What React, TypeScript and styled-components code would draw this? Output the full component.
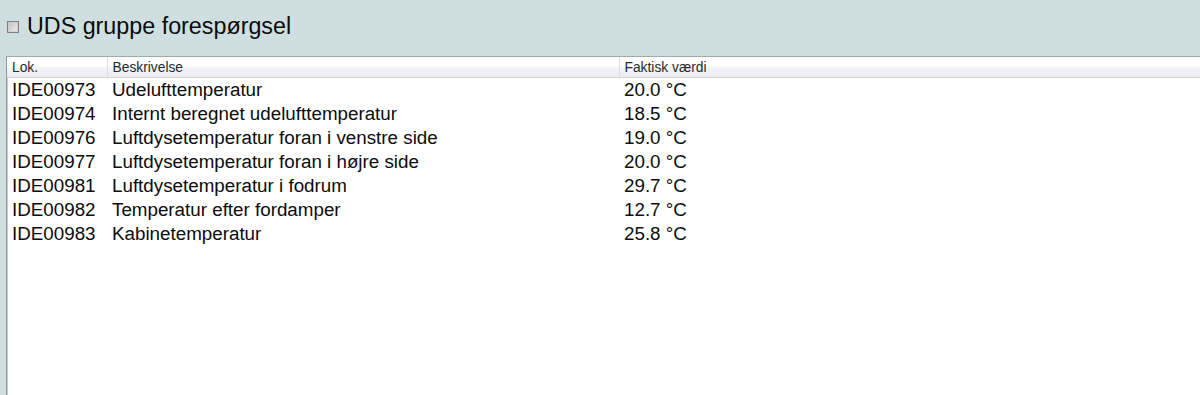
import React from 'react'
import styled, {createGlobalStyle} from 'styled-components'

const rows = [
  {lok: 'IDE00973', desc: 'Udelufttemperatur', value: '20.0 °C'},
  {lok: 'IDE00974', desc: 'Internt beregnet udelufttemperatur', value: '18.5 °C'},
  {lok: 'IDE00976', desc: 'Luftdysetemperatur foran i venstre side', value: '19.0 °C'},
  {lok: 'IDE00977', desc: 'Luftdysetemperatur foran i højre side', value: '20.0 °C'},
  {lok: 'IDE00981', desc: 'Luftdysetemperatur i fodrum', value: '29.7 °C'},
  {lok: 'IDE00982', desc: 'Temperatur efter fordamper', value: '12.7 °C'},
  {lok: 'IDE00983', desc: 'Kabinetemperatur', value: '25.8 °C'},
]

const App = () => {
  return (
    <>
      <Global />
      <Page>
        <TitleBar>
          <Check />
          <Title>UDS gruppe forespørgsel</Title>
        </TitleBar>
        <Panel>
          <Table>
            <colgroup>
              <col style={{width: 100}} />
              <col style={{width: 512}} />
              <col />
            </colgroup>
            <thead>
              <tr>
                <Th>Lok.</Th>
                <Th>Beskrivelse</Th>
                <Th last>Faktisk værdi</Th>
              </tr>
            </thead>
            <tbody>
              {rows.map((r) => (
                <tr key={r.lok}>
                  <Td>{r.lok}</Td>
                  <Td>{r.desc}</Td>
                  <Td>{r.value}</Td>
                </tr>
              ))}
            </tbody>
          </Table>
        </Panel>
      </Page>
    </>
  )
}

export default App

const Global = createGlobalStyle`
  html, body {
    margin: 0;
    padding: 0;
    background: #cfdfdf;
    font-family: "Liberation Sans", Arial, sans-serif;
  }
`

const Page = styled.div`
  width: 1200px;
  height: 395px;
  overflow: hidden;
  display: flex;
  flex-direction: column;
`

const TitleBar = styled.div`
  height: 56px;
  display: flex;
  align-items: center;
  padding: 0 0 4px 7px;
  box-sizing: border-box;
  gap: 8px;
`

const Check = styled.span`
  width: 10px;
  height: 10px;
  border: 1px solid #808080;
  background: linear-gradient(135deg, #bcbcbc 0%, #d8d8d8 50%, #efefef 100%);
  box-shadow: inset 0 0 0 1px #cfcfcf;
  margin-top: 2px;
  flex: none;
`

const Title = styled.h1`
  margin: 0;
  font-size: 23.3px;
  font-weight: normal;
  color: #0c0c0c;
`

const Panel = styled.div`
  flex: 1;
  margin-left: 6px;
  background: #fff;
  border-top: 1px solid #9fabab;
  border-left: 1px solid #8e9898;
  box-shadow: inset 1px 0 0 #c9cfcf;
  overflow: hidden;
`

const Table = styled.table`
  width: 100%;
  border-collapse: collapse;
  table-layout: fixed;
`

const Th = styled.th<{last?: boolean}>`
  height: 19px;
  padding: 1px 0 0 5px;
  text-align: left;
  font-size: 13.8px;
  font-weight: normal;
  color: #2a2a2a;
  background: linear-gradient(#ffffff 0%, #ffffff 45%, #f1f2f5 55%, #eceef1 100%);
  border-bottom: 1px solid #d4d4d4;
  border-right: ${(p) => (p.last ? 'none' : '1px solid #dcdcdc')};
  white-space: nowrap;
`

const Td = styled.td`
  height: 24px;
  padding: 0 0 0 5px;
  font-size: 18.8px;
  color: #0c0c0c;
  white-space: nowrap;
`
